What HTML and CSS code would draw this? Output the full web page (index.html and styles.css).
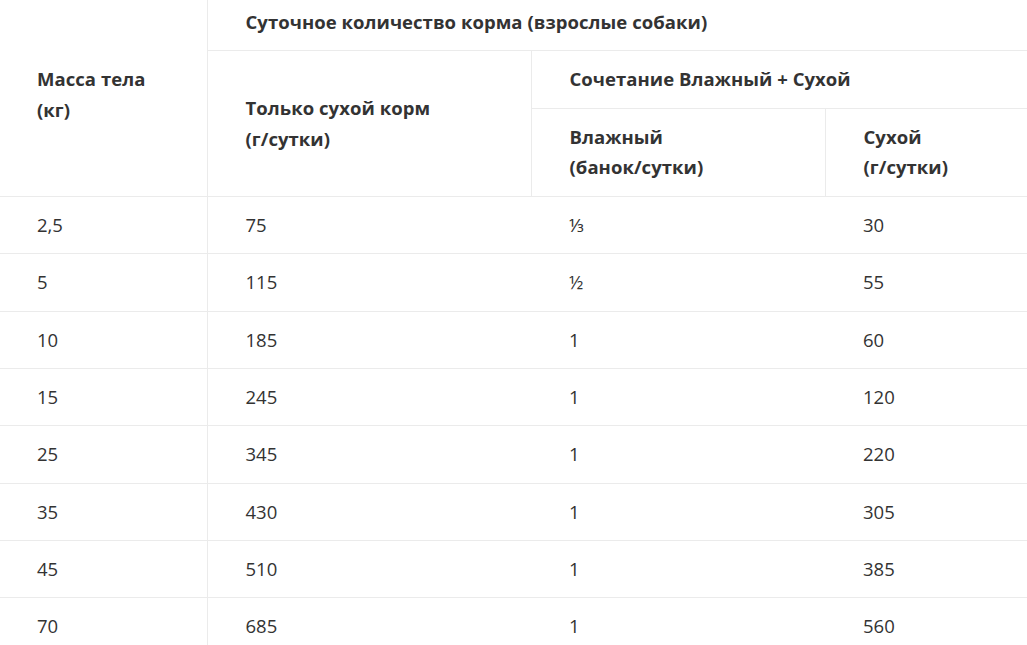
FILE: index.html
```html
<!DOCTYPE html>
<html lang="ru">
<head>
<meta charset="utf-8">
<link rel="stylesheet" href="styles.css">
</head>
<body>
<table class="feed">
  <colgroup>
    <col class="c1"><col class="c2"><col class="c3"><col class="c4">
  </colgroup>
  <thead>
    <tr>
      <th rowspan="3" class="mass">Масса тела<br>(кг)</th>
      <th colspan="3" class="top">Суточное количество корма (взрослые собаки)</th>
    </tr>
    <tr>
      <th rowspan="2" class="dry">Только сухой корм<br>(г/сутки)</th>
      <th colspan="2" class="combo">Сочетание Влажный + Сухой</th>
    </tr>
    <tr>
      <th class="sub">Влажный<br>(банок/сутки)</th>
      <th class="sub">Сухой<br>(г/сутки)</th>
    </tr>
  </thead>
  <tbody>
    <tr><td>2,5</td><td>75</td><td>⅓</td><td>30</td></tr>
    <tr><td>5</td><td>115</td><td>½</td><td>55</td></tr>
    <tr><td>10</td><td>185</td><td>1</td><td>60</td></tr>
    <tr><td>15</td><td>245</td><td>1</td><td>120</td></tr>
    <tr><td>25</td><td>345</td><td>1</td><td>220</td></tr>
    <tr><td>35</td><td>430</td><td>1</td><td>305</td></tr>
    <tr><td>45</td><td>510</td><td>1</td><td>385</td></tr>
    <tr><td>70</td><td>685</td><td>1</td><td>560</td></tr>
  </tbody>
</table>
</body>
</html>
```
FILE: styles.css
```css
html, body {
  margin: 0;
  padding: 0;
  background: #fff;
}
body {
  font-family: "Open Sans", "Noto Sans", sans-serif;
  color: #333;
  font-size: 18.5px;
}
.feed {
  border-collapse: collapse;
  width: 1027px;
  table-layout: fixed;
  margin-top: -7px;
}
.c1 { width: 207px; }
.c2 { width: 324px; }
.c3 { width: 294px; }
.c4 { width: 202px; }
th, td {
  text-align: left;
  vertical-align: middle;
  line-height: 30.3px;
  padding: 13px 10px 13px 38px;
}
th {
  font-weight: 700;
  letter-spacing: 0.05px;
}
td {
  font-weight: 400;
  border-top: 1px solid #ebebeb;
}
.mass {
  padding-left: 37px;
  border-right: 1px solid #ebebeb;
}
.top {
  padding-top: 14px;
  padding-bottom: 13px;
}
.dry {
  border-top: 1px solid #ebebeb;
}
.combo {
  border-top: 1px solid #ebebeb;
  border-left: 1px solid #ebebeb;
}
.sub {
  border-top: 1px solid #ebebeb;
  border-left: 1px solid #ebebeb;
  padding-bottom: 14px;
}
tbody td:first-child {
  padding-left: 37px;
  border-right: 1px solid #ebebeb;
}
```
